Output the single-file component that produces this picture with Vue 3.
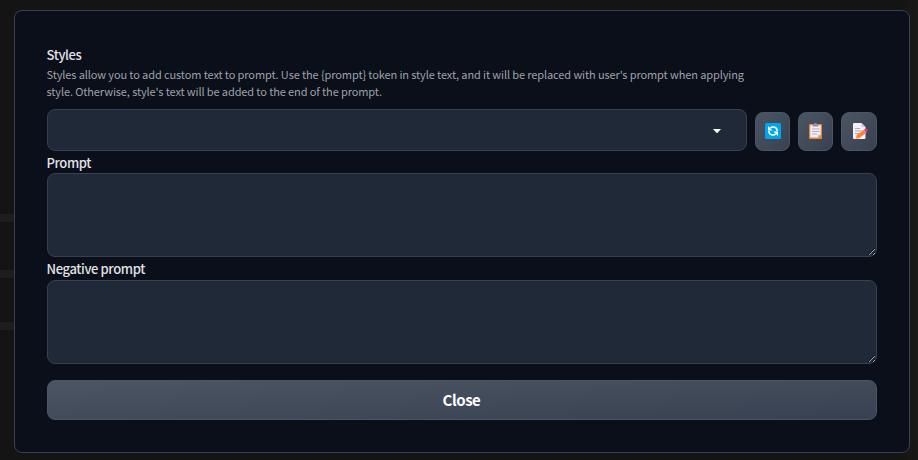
<script setup>
import { ref } from 'vue'

const prompt = ref('')
const negativePrompt = ref('')
</script>

<template>
  <main class="backdrop">
    <div class="rail"><i></i><i></i><i></i></div>
    <section class="dialog">
      <div class="style-row">
        <div class="style-field">
          <div class="label">Styles</div>
          <p class="info">
            <span>Styles allow you to add custom text to prompt. Use the {prompt} token in style text, and it will be replaced with user's prompt when applying</span><br />
            <span>style. Otherwise, style's text will be added to the end of the prompt.</span>
          </p>
          <div class="dropdown">
            <svg width="8" height="5" viewBox="0 0 8 5"><path d="M0 0h8L4.6 3.8q-.6.6-1.2 0z" fill="#fff" /></svg>
          </div>
        </div>
        <button class="tool" aria-label="Refresh">
          <svg width="16" height="16" viewBox="0 0 16 16">
            <rect width="16" height="16" rx="1.5" fill="#00a6ed" />
            <g fill="none" stroke="#fff" stroke-width="1.7">
              <path d="M5.500 5q1-1 2.500-1 3.800 0 4.200 4" />
              <path d="M10.500 11q-1 1-2.500 1-3.800 0-4.200-4" />
            </g>
            <path d="M3 3v4.500h4.500zM13 13V8.500H8.500z" fill="#fff" />
          </svg>
        </button>
        <button class="tool" aria-label="Apply styles">
          <svg width="13" height="16" viewBox="0 0 13 16">
            <rect y="1" width="13" height="15" rx=".8" fill="#e18b35" />
            <path d="M1.300 2.300h10.400v9.200l-3 3H1.300z" fill="#f3eef8" />
            <path d="M11.700 11.500h-3v3z" fill="#cdc4d6" />
            <path d="M3 6h7.500M3 8.500h7.500M3 11h5" stroke="#b4acbc" />
            <path d="M3.500 1h1.700a1.300 1.300 0 0 1 2.600 0h1.700v2.600h-6z" fill="#998ea4" />
          </svg>
        </button>
        <button class="tool last" aria-label="Edit">
          <svg width="16" height="16" viewBox="0 0 16 16">
            <path d="M1 0h7.500l4 4v11q0 1-1 1H1q-1 0-1-1V1q0-1 1-1z" fill="#f3eef8" />
            <path d="M8.500 0v3q0 1 1 1h3z" fill="#cdc4d6" />
            <path d="M2 5.500h5M2 8h8M2 10.500h5" stroke="#b4acbc" />
            <path d="m3.600 12 7.300-5 2.200 3-7.200 5.200-2.800.3z" fill="#ff822d" />
            <path d="m10.500 7.200.9-.6 2.200 3-.9.6z" fill="#b4acbc" />
            <path d="m11.100 6.700 1.100-.8q1.500-.5 2.400.5.700 1.200-.5 2.200l-1 .8z" fill="#f92f60" />
          </svg>
        </button>
      </div>
      <label class="label area-label" for="prompt">Prompt</label>
      <textarea id="prompt" v-model="prompt"></textarea>
      <label class="label area-label second-label" for="negative">Negative prompt</label>
      <textarea id="negative" v-model="negativePrompt"></textarea>
      <button class="close">Close</button>
    </section>
  </main>
</template>

<style>
body { background: #141414; }
</style>

<style scoped>
* { box-sizing: border-box; }
.backdrop {
  display: flex;
  align-items: flex-start;
  width: 918px;
  height: 460px;
  padding-top: 10px;
  overflow: hidden;
  background: linear-gradient(90deg, #141414 900px, #1b1918 918px);
  font-family: "Noto Sans CJK SC", "Noto Sans", sans-serif;
}
.rail {
  display: flex;
  flex-direction: column;
  width: 14px;
  padding-top: 204px;
}
.rail i { height: 8px; margin-bottom: 48px; background: #1e1e1e; }
.rail i:nth-child(2) { margin-bottom: 44px; }
.dialog {
  display: flex;
  flex-direction: column;
  width: 896px;
  height: 443px;
  padding: 35px 32px 32px;
  border: 1px solid #374151;
  border-radius: 8px;
  background: #0b0f19;
}
.style-row { display: flex; align-items: flex-end; gap: 8px; height: 105px; }
.style-field { width: 700px; }
.label {
  display: block;
  height: 18px;
  margin-left: -0.5px;
  color: #e0e2e6;
  font-size: 13px;
  font-weight: 500;
  letter-spacing: -0.38px;
  line-height: 18px;
  white-space: nowrap;
}
.info {
  height: 34px;
  margin: 2px 0 9px -0.5px;
  color: #9fa1ab;
  font-size: 11px;
  letter-spacing: -0.115px;
  line-height: 17px;
  white-space: nowrap;
}
.dropdown {
  display: flex;
  align-items: center;
  justify-content: flex-end;
  height: 42px;
  padding: 2px 25.5px 0 0;
  border: 1px solid #374151;
  border-radius: 8px;
  background: #1f2937;
}
.tool, .close {
  margin: 0;
  border: 1px solid #4b5563;
  border-radius: 8px;
  background: linear-gradient(to bottom right, #4b5563, #374151);
}
.tool {
  display: flex;
  flex: none;
  align-items: center;
  justify-content: center;
  width: 35px;
  height: 39px;
  padding: 0 0 1px;
}
.last { width: 36px; padding-left: 3px; }
.area-label { margin-top: 3px; height: 19px; }
.second-label { height: 20px; }
textarea {
  display: block;
  flex: none;
  width: 830px;
  height: 84px;
  margin: 0;
  padding: 10px;
  border: 1px solid #374151;
  border-radius: 8px;
  outline: 0;
  background: #1f2937;
  color: #fff;
  color-scheme: dark;
  font: inherit;
  resize: vertical;
}
.close {
  flex: none;
  height: 40px;
  margin-top: 16px;
  padding: 0 1px 0 0;
  color: #fff;
  font-family: inherit;
  font-size: 15px;
  font-weight: 700;
  letter-spacing: -0.45px;
  line-height: 24px;
}
</style>
